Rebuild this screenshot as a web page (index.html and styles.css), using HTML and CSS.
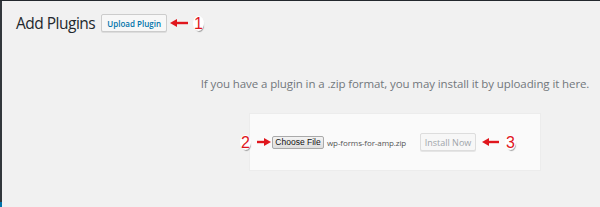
FILE: index.html
```html
<!DOCTYPE html>
<html lang="en">
<head>
    <meta charset="UTF-8">
    <meta name="viewport" content="width=device-width, initial-scale=1.0">
    <title>Add Plugins</title>
    <link rel="stylesheet" href="styles.css">
</head>
<body>
    <div class="admin-bar"></div>
    <div class="layout">
        <aside class="admin-menu">
            <div class="menu-current"></div>
        </aside>

        <main class="wrap">
            <div class="page-title">
                <h1>Add Plugins</h1>
                <button class="upload-btn">Upload Plugin</button>
                <svg class="arrow" width="18" height="8" viewBox="0 0 18 8">
                    <polygon points="0,4 7,0 7,8" />
                    <rect x="6" y="2.8" width="12" height="2.4" />
                </svg>
                <span class="step step-1">1</span>
            </div>

            <div class="upload-plugin">
                <p class="install-help">If you have a plugin in a .zip format, you may install it by uploading it here.</p>

                <form class="upload-form" onsubmit="return false">
                    <span class="step step-2">2</span>
                    <svg class="arrow arrow-2" width="14" height="8" viewBox="0 0 14 8">
                        <rect x="0" y="2.8" width="8" height="2.4" />
                        <polygon points="14,4 7,0 7,8" />
                    </svg>
                    <span class="file-btn">Choose File</span>
                    <span class="file-name">wp-forms-for-amp.zip</span>
                    <button class="install-btn" disabled>Install Now</button>
                    <svg class="arrow arrow-3" width="17" height="8" viewBox="0 0 17 8">
                        <polygon points="0,4 7,0 7,8" />
                        <rect x="6" y="2.8" width="11" height="2.4" />
                    </svg>
                    <span class="step step-3">3</span>
                </form>
            </div>
        </main>
    </div>
</body>
</html>
```

FILE: styles.css
```css
:root {
    --bg: #f1f1f1;
    --dark: #23282d;
    --blue: #0073aa;
    --red: #e0161d;
    --text: #23282d;
    --muted: #72777c;
}

body {
    margin: 0;
    height: 207px;
    overflow: hidden;
    background: var(--bg);
    font-family: 'Liberation Sans', Arial, sans-serif;
    color: var(--text);
}

.admin-bar {
    height: 1px;
    background: var(--dark);
}

.layout {
    display: flex;
    height: 206px;
}

.admin-menu {
    width: 2px;
    background: #32373c;
    display: flex;
    flex-direction: column;
    justify-content: flex-end;
}

.menu-current {
    height: 5px;
    background: var(--blue);
}

.wrap {
    flex: 1;
    padding: 13px 0 0 14px;
}

/* title row */
.page-title {
    display: flex;
    align-items: center;
    height: 18px;
}

.page-title h1 {
    margin: 0;
    font-family: 'Open Sans', sans-serif;
    font-size: 15.5px;
    font-weight: 400;
    letter-spacing: -0.5px;
    line-height: 18px;
    color: var(--text);
}

.upload-btn {
    height: 18px;
    margin-left: 6px;
    padding: 0 5px;
    border: 1px solid #ccc;
    border-radius: 2px;
    background: #f7f7f7;
    color: var(--blue);
    font-family: 'Open Sans', sans-serif;
    font-size: 8px;
    font-weight: 600;
    box-shadow: 0 1px 0 #ddd;
}

.arrow {
    fill: var(--red);
    flex: none;
}

.page-title .arrow {
    margin-left: 3px;
}

.step {
    display: inline-block;
    width: 11px;
    height: 15px;
    color: var(--red);
    font-size: 16px;
    line-height: 15px;
    text-align: center;
    border-radius: 50%;
    box-shadow: 1px 2px 1px -1px rgba(0, 0, 0, 0.35);
    background: #fff;
}

.step-1 {
    margin-left: 5px;
}

/* upload area */
.upload-plugin {
    padding-left: 174px;
}

.install-help {
    margin: 44px 0 21px;
    text-align: center;
    font-family: 'Open Sans', sans-serif;
    font-size: 11.5px;
    letter-spacing: -0.1px;
    line-height: 16px;
    color: var(--muted);
}

.upload-form {
    box-sizing: border-box;
    width: 292px;
    height: 58px;
    margin: 0 auto;
    display: flex;
    align-items: center;
    background: #fafafa;
    border: 1px solid #ececec;
}

.step-2 {
    margin-left: -10px;
}

.arrow-2 {
    margin-left: 6px;
}

.file-btn {
    box-sizing: border-box;
    width: 52px;
    height: 13px;
    margin-left: 1px;
    border: 1px solid #a9a9a9;
    border-radius: 2px;
    background: linear-gradient(#f3f3f3, #dedede);
    font-size: 8.5px;
    line-height: 11px;
    text-align: center;
    color: #111;
}

.file-name {
    margin-left: 3px;
    width: 77px;
    font-family: 'Open Sans', sans-serif;
    font-size: 8px;
    letter-spacing: -0.1px;
    color: #555;
    white-space: nowrap;
}

.install-btn {
    box-sizing: border-box;
    width: 56px;
    height: 18px;
    margin-left: 16px;
    padding: 0;
    border: 1px solid #ddd;
    border-radius: 2px;
    background: #f7f7f7;
    box-shadow: 0 1px 0 #e5e5e5;
    font-family: 'Open Sans', sans-serif;
    font-size: 9px;
    color: #a0a5aa;
}

.arrow-3 {
    margin-left: 6px;
}

.step-3 {
    margin-left: 6px;
}
```
